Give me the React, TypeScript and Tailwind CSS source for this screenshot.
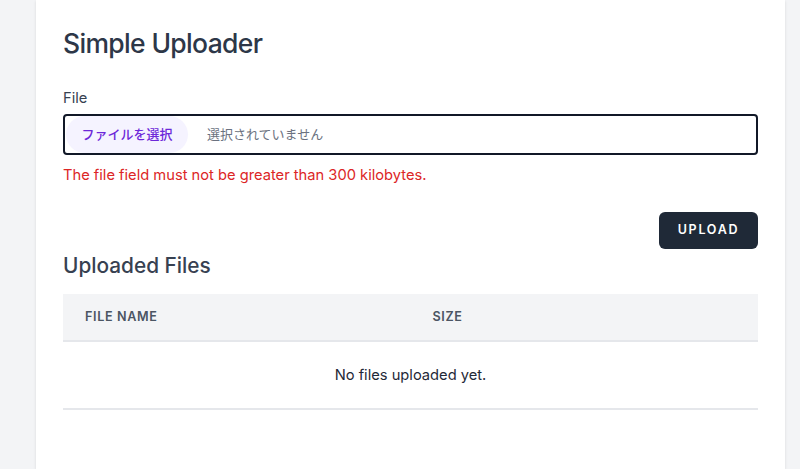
export default function App() {
  return (
    <main className="min-h-[469px] w-full bg-[#f3f4f6] font-['Inter','Noto_Sans_CJK_JP',sans-serif] text-gray-800">
      <div className="ml-[36px] w-[749px] h-[469px] bg-white shadow-sm px-[27px] pt-[27px]">
        <h1 className="text-[26.5px] leading-8 font-medium text-[#2d3748] tracking-tight">Simple Uploader</h1>

        <form className="mt-[29px]">
          <label className="block text-[14.7px] leading-5 text-[#374151]">File</label>
          <div className="mt-1.5 flex h-[41px] items-center rounded-[4px] border-2 border-[#111827]">
            <span className="ml-px flex h-[37px] w-[122px] items-center justify-center rounded-full bg-[#f5f3ff] text-[13px] font-medium text-[#6d28d9]">
              ファイルを選択
            </span>
            <span className="ml-[19px] text-[13px] text-[#6b7280]">選択されていません</span>
          </div>
          <p className="mt-2.5 text-[14.7px] leading-5 text-[#dc2626]">The file field must not be greater than 300 kilobytes.</p>

          <div className="mt-[27px] flex justify-end">
            <button
              type="button"
              className="h-[37px] w-[99px] rounded-md bg-[#1f2937] text-[12.5px] font-semibold uppercase tracking-[0.14em] text-white"
            >
              Upload
            </button>
          </div>
        </form>

        <h2 className="mt-[3px] text-[20.8px] leading-7 font-medium text-[#374151]">Uploaded Files</h2>

        <table className="mt-[14px] w-full text-left">
          <thead>
            <tr className="h-[47px] border-b-2 border-[#e5e7eb] bg-[#f3f4f6]">
              <th className="w-1/2 px-[22px] text-[12.6px] font-semibold uppercase tracking-wider text-[#4b5563]">File Name</th>
              <th className="w-1/2 px-[22px] text-[12.6px] font-semibold uppercase tracking-wider text-[#4b5563]">Size</th>
            </tr>
          </thead>
          <tbody>
            <tr className="h-[68px] border-b-2 border-[#e5e7eb]">
              <td colSpan={2} className="text-center text-[14.7px] text-[#1f2937]">No files uploaded yet.</td>
            </tr>
          </tbody>
        </table>
      </div>
    </main>
  );
}
